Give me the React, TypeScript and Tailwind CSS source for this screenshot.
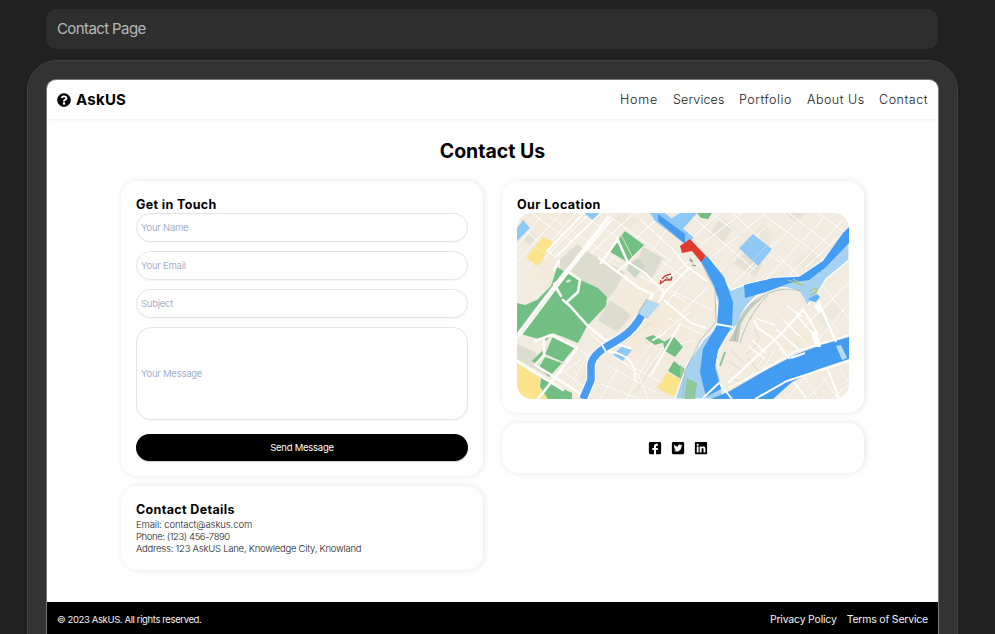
import type { ReactNode } from "react";
import { FaQuestionCircle, FaFacebookSquare, FaTwitterSquare, FaLinkedin } from "react-icons/fa";

const navLinks = [
  { label: "Home", cls: "w-[38px] tracking-[0.85px]" },
  { label: "Services", cls: "w-[51px] tracking-[0.15px]" },
  { label: "Portfolio", cls: "w-[53px] tracking-[0.55px]" },
  { label: "About Us", cls: "w-[57px] tracking-[0.5px]" },
  { label: "Contact", cls: "w-[49px] tracking-[0.55px]" },
];

const minorRoads =
  "M517 247L543 214M517 262L560 214M524 272L576 213M544 258L590 213M590 254L634 213M599 270L665 213M531 213L604 264M517 222L556 258M550 217L620 262M578 213L639 250M605 213L672 262M640 219L680 256M630 244L660 216M633 280L672 221M648 285L688 238M655 292L694 256M620 275L641 246M637 274L685 301M645 249L685 278M670 290L712 310M665 305L700 262M680 314L712 283M668 318L706 336M661 335L690 312M655 350L696 340M645 373L680 324M635 365L662 330M616 358L670 387M607 365L657 393M601 384L640 399M600 399L618 368M626 399L651 354M606 350L638 374L648 399M562 370L584 387M570 353L560 374L582 359M574 379L591 349M580 350L597 362M590 333L606 348M694 218L755 270M710 213L780 262M733 213L800 277M761 213L830 263M789 213L846 258M819 213L849 236M690 240L720 213M697 248L742 213M708 260L761 217M719 274L764 228M732 285L777 240M747 275L799 219M766 279L823 219M788 276L843 220M805 268L845 231M735 368L790 310M724 376L805 292M741 388L765 357M756 381L779 343M786 356L756 327M799 349L769 322M805 343L780 307M821 337L793 300M839 333L812 295M849 319L824 287M803 328L849 283M816 343L849 302M787 399L807 375M807 399L833 371M832 399L849 384M805 378L818 399M821 374L838 399M840 370L849 383";

const LocationMap = () => (
  <svg viewBox="517 213 332 186" className="block h-[186px] w-full rounded-[15px]" role="img" aria-label="City map">
    <path fill="#f2ebdf" d="M517 213h332v186H517z" />
    <path fill="#f6e9d7" opacity=".45" d="M517 213h70l-30 35-40-15zM617 290l35-15 45 30-20 60-60-10zM717 370l60-70 50 35-50 20-50 40zM540 250l20 10-10 25-25-10z" />
    <g fill="#e5e2d4">
      <path d="M719 220l14 9-10 14-13-8zM748 250l15 14-8 13-22-13zM785 213h22l-11 9zM523 240l8-8 6 5-7 8z" />
    </g>
    <g fill="#ebe8d9">
      <path d="M579 379l9-11-2 19zM620 213l19 7-8 9-18-10zM795 263l18-16 8 10-12 14zM761 224l14 9-8 11-15-9zM816 316l22-16 5 13-17 17z" />
    </g>
    <path d={minorRoads} fill="none" stroke="#dedbd0" strokeWidth="1.7" opacity=".55" />
    <path d={minorRoads} fill="none" stroke="#fff" strokeWidth="1.1" opacity=".9" />

    <g fill="#dcdccf">
      <path d="M560 260l17-16 16 11 32 17-8 15-10 13-9-12-38-18zM643 247l20 11-11 20-17-11zM598 320l12-20 21 15-14 17zM517 344l20 9-3 10 15 14-32-18z" />
    </g>
    <path fill="#cbd6c7" d="M628 265l10-7 7 8-10 12-8-8z" />
    <g fill="#72bf83">
      <path d="M625 231l19 14-17 17-18-11zM557 267l13 8 28 13 9 9-1 9-19 20-9 17-25-10-7 8-29-8v-30l8 2 12-5 14-14z" />
      <path d="M553 336l22 11-12 15-18-8zM546 347l-8 18-6-4zM545 357l17 6-13 14-10-10zM541 378l31 15v6h-25l-7-12zM645 338l8-3 12 7-10 3zM663 343l10-7 10 11-8 10-10-6zM674 361l11 9-4 9-13-8zM697 213h15l-4 6-7-1-4-5z" />
    </g>
    <g fill="#fde38b">
      <path d="M526 258l17-21 10 5-15 24zM517 363l23 15v9l8 12h-31zM667 372l14 8-7 17-17-9z" />
    </g>
    <path d="M534 247l13 7M621 235l12 23" stroke="#f7efbb" strokeWidth=".8" />
    <g fill="#8ec8f6">
      <path d="M517 228l6-8 7 8-13 13zM753 234l19 15-14 17-19-18zM584 213h18l-8 8zM650 213h15l29 25-9 6-30-23zM680 213h17l-15 17-13-10zM613 355l9-9 10 4-9 11zM517 213h7l-7 8z" />
    </g>

    <g fill="none" stroke="#ddd8c6" strokeWidth=".6">
      <path d="M588 367q19-12 27-28M712 286l38-50M722 219l31 25M744 270l37-40M636 392l20-32M620 345l35-24" />
    </g>
    {/* Main road network */}
    <g fill="none" stroke="#fffefa" strokeLinejoin="round" strokeLinecap="round">
      <path strokeWidth="3.6" d="M517 336l20-27 20-26 14-17 37-48" />
      <path strokeWidth="1.8" d="M521 335l33-44 7-9 13-17 37-45M557 256l51-50M547 251l37-38" />
      <path strokeWidth="2.6" d="M554 270l5-9M554 284l4-2 8-12 14 10-2 12-10 9M554 284l7 12M563 300l7 6 17 19 18 15 25 8" />
      <path strokeWidth="2.6" d="M599 258l40 30 14 6-14 32-12 12M617 238l11 25M601 263l17-24M653 294l-5 9M535 341l16-6 26 13-16 22-24 30M544 339v16l-9 10 18 11 28 18M517 361l46 29" />
      <path strokeWidth="2" d="M627 263l-9 8M628 262l17 11 20 20M665 293l-6 9M672 248l13 17 22 16M688 269l-27 27M665 301l26 22 15 5M680 324l-29 51M635 379q2-23-26-28M653 340l12-7" />
    </g>
    <path fill="#e5e9df" d="M566 281l4-2 1 2-4 2z" />

    {/* Narrow canal */}
    <path d="M643 313q-8 16-22 25l-15 9q-13 8-15 17v16l-8 19" fill="none" stroke="#fbfcf9" strokeWidth="10" />
    <path d="M643 313q-8 16-22 25l-15 9q-13 8-15 17v16l-8 19" fill="none" stroke="#489df0" strokeWidth="7.5" />
    <path d="M602 345l4 7" stroke="#edf6f7" strokeWidth="2" />
    <path fill="#b3d9ef" d="M638 313l9-14 13 5-13 15z" />
    <path d="M638 313l9-14" stroke="#a3aba8" strokeWidth=".8" />

    {/* River */}
    <path fill="#a5d2f0" stroke="#fff" strokeWidth="1.2" d="M698 260l11-3 22 33 18-7 30-6 21-1 22-15 27-31v30l-23 19-9 15-14 16-7-20q-24-7-36 3-18 14-22 31l-15 16-7 19 7 28 20 12h-68l12-35 17-25 12-11 2-23-7-28z" />
    <path fill="#8fc99d" d="M687 378l10 5-2 16h-11zM680 365l5 4-5 11z" />
    <path fill="#f3ebdf" d="M720 381l-5-18 6-19 20-21 8-16 20-14 31-2 10 18-15 31-35 17-38 42z" />
    <path d="M738 342l3-18q10-20 30-31l-19 10q-14 15-18 29l-5 9z" fill="#bfc9bd" />
    <path fill="none" stroke="#abb6b0" strokeWidth=".8" d="M740 343l3-9q8-22 25-39M735 341q1-37 39-50 14-4 26 0M702 264l13 26 1 32-16 19-15 30-3 28" />
    <path fill="none" stroke="#d6cdbb" strokeWidth=".7" d="M746 355l9-9 4-9-5-8M729 361l13 10M730 350l15 14M733 379l14 5M762 375l-14-17" />
    <path fill="#429cf2" d="M701 261l6-5 17 21 9 25-1 24-14 24-3 17 6 22-15 8-6-25 3-23 14-24 2-25-5-14zM744 285l29-7 26-1 24-16 20-28 6-6v16l-23 24-17 13-19 3-24 9-21 6zM711 399l19-8 38-22 29-15 24-9 28-8v22l-33 11-24 12-19 17z" />
    <path fill="#489cf0" d="M658 214l27 20v10l-27-23z" />
    <path fill="#b9daeb" d="M836 346l5-1 6 13-5 2z" />
    <path d="M716 324l17 3M703 398l17-16M720 384l12 15" stroke="#f7faf8" strokeWidth="2" />
    <path d="M728 397l23-10 36-20 30-12 34-10M719 381l36-37M790 359l-33-35" fill="none" stroke="#fff" strokeWidth="0" />
    <path d="M728 383l53-49 22-24M790 359l-15-19-17-12-4-8M791 358l14-5" fill="none" stroke="#fff" strokeWidth="2" />
    <path d="M729 388l34-18 31-18 55-17M719 367l-2-8" fill="none" stroke="#fffdf8" strokeWidth="1.6" />
    <path d="M720 366l5-14" stroke="#8dc2a0" strokeWidth="2" />
    <path fill="#fff" d="M814 307l5-7 3 7-2 7zM811 332l6-1 4 16h-6z" />
    <g fill="none" stroke="#fff">
      <path strokeWidth="2.2" d="M802 308l8 12 8 15M821 308l15 34" />
      <path strokeWidth="1.4" d="M757 319l18 6M783 319l16 17M796 314l21 25M776 329l24 22M748 346l17 13M752 340l14 13M787 306l16 11" />
      <path strokeWidth="2" d="M755 399l32-18 62-20M794 382l12 16M828 370l11 28" />
    </g>
    <path d="M788 280l11 4 5 1M809 291l7-3 1 4-7 3" fill="none" stroke="#a7c789" strokeWidth="1.3" />
    <path d="M793 279l9 5M812 289l5 3" fill="none" stroke="#e7d367" strokeWidth="1" />
    <path d="M808 299l9-5 3 3-4 5-5-1z" fill="#63b1f2" />

    {/* Place markers */}
    <path fill="#df3b31" d="M680 246l10-7 16 17-5 6-9-11-10 2z" />
    <path d="M689 260l4 2M692 265l4 1M690 258l2 3" fill="none" stroke="#848780" strokeWidth="1" />
    <path d="M661 283q3-9 12-9" fill="none" stroke="#fff" strokeWidth="4" />
    <path d="M660 284l5-4h6l1-3M660 284l1-4M662 279q3-4 9-5" fill="none" stroke="#d43d35" strokeWidth="1.3" />
    <path d="M665 281l2-4 2 3 3-4" fill="none" stroke="#704e48" strokeWidth=".7" />
  </svg>
);

const Card = ({ className, children }: { className: string; children: ReactNode }) => (
  <section className={`rounded-[16px] bg-white px-[15px] shadow-[1px_0_6px_rgba(0,0,0,0.1)] ${className}`}>{children}</section>
);

const fieldClass =
  "block w-full border border-[#e4e4e7] bg-white px-[4px] text-[9.5px] tracking-[-0.25px] shadow-[0_1px_1px_rgba(0,0,0,0.04)] outline-none placeholder:text-[#a4b1c8]";

export default function App() {
  return (
    <div className="h-[634px] w-[995px] overflow-hidden bg-[#212121] pt-[9px] font-['Inter','Liberation_Sans',sans-serif]">
      <div className="ml-[46px] flex h-10 w-[892px] items-center rounded-[10px] bg-[#2e2e2e] pl-[11px] text-[15px] tracking-[-0.6px] text-[#b8b8b8]">
        Contact Page
      </div>
      <div className="ml-[27px] mt-[11px] h-[620px] w-[931px] rounded-t-[30px] border border-[#424242] bg-[#333] px-[18px] pt-[18px]">
        <div className="flex h-[600px] flex-col overflow-hidden rounded-t-[10px] border border-[#777] bg-white text-black">
          <header className="flex h-[39px] shrink-0 items-center justify-between px-[10px] shadow-[0_1px_3px_rgba(0,0,0,0.06)]">
            <div className="flex items-center gap-[5px] whitespace-nowrap text-[15px] font-bold leading-5">
              <FaQuestionCircle className="size-[14px]" />
              <span className="tracking-[0.25px]">AskUS</span>
            </div>
            <nav className="flex gap-[15px] whitespace-nowrap pt-[2px] text-[12.5px] font-light text-[#171717]">
              {navLinks.map((link) => (
                <a key={link.label} href="#" className={link.cls}>{link.label}</a>
              ))}
            </nav>
          </header>

          <main className="flex h-[483px] shrink-0 flex-col items-center pt-[18px]">
            <h1 className="h-[44px] text-[19.5px] font-bold leading-[29px] tracking-[0px]">Contact Us</h1>
            <div className="flex w-[743px] items-start gap-[19px]">
              <div className="flex w-[362px] flex-col gap-[10px]">
                <Card className="h-[295px] pt-[16px]">
                  <h2 className="h-[16px] text-[12.5px] font-bold leading-[15px] tracking-[0.35px]">Get in Touch</h2>
                  <form className="flex flex-col" onSubmit={(event) => event.preventDefault()}>
                    <input className={`${fieldClass} h-[29px] rounded-[15px]`} placeholder="Your Name" />
                    <input className={`${fieldClass} mt-[9px] h-[29px] rounded-[15px]`} placeholder="Your Email" />
                    <input className={`${fieldClass} mt-[9px] h-[29px] rounded-[15px]`} placeholder="Subject" />
                    <input className={`${fieldClass} mt-[9px] h-[93px] rounded-[15px]`} placeholder="Your Message" />
                    <button className="mt-[14px] h-[27px] rounded-[14px] bg-black pt-[2px] text-[9.5px] tracking-[-0.25px] text-white shadow-[0_1px_1px_rgba(0,0,0,0.2)]">
                      Send Message
                    </button>
                  </form>
                </Card>
                <Card className="h-[84px] pt-[16px]">
                  <h2 className="h-[17px] text-[12.5px] font-bold leading-[16px] tracking-[0.35px]">Contact Details</h2>
                  <div className="whitespace-nowrap text-[9.5px] font-light leading-[12px] text-[#171717]">
                    <p className="tracking-[-0.1px]">Email: contact@askus.com</p>
                    <p className="tracking-[-0.4px]">Phone: (123) 456-7890</p>
                    <p className="tracking-[-0.24px]">Address: 123 AskUS Lane, Knowledge City, Knowland</p>
                  </div>
                </Card>
              </div>
              <div className="flex w-[362px] flex-col gap-[10px]">
                <Card className="h-[232px] pt-[16px]">
                  <h2 className="h-[16px] text-[12.5px] font-bold leading-[15px] tracking-[0.45px]">Our Location</h2>
                  <LocationMap />
                </Card>
                <Card className="flex h-[50px] items-center justify-center gap-[9px] pr-[26px]">
                  <FaFacebookSquare className="size-[14px]" />
                  <FaTwitterSquare className="size-[14px]" />
                  <FaLinkedin className="size-[14px]" />
                </Card>
              </div>
            </div>
          </main>

          <footer className="flex h-[70px] shrink-0 items-start justify-between whitespace-nowrap bg-black px-[10px] pt-[10px] leading-[15px] text-[#f4f4f4]">
            <p className="text-[9.5px] tracking-[-0.38px]">© 2023 AskUS. All rights reserved.</p>
            <div className="flex gap-[10px] text-[10.5px] tracking-[-0.2px]">
              <a href="#">Privacy Policy</a>
              <a href="#">Terms of Service</a>
            </div>
          </footer>
        </div>
      </div>
    </div>
  );
}
